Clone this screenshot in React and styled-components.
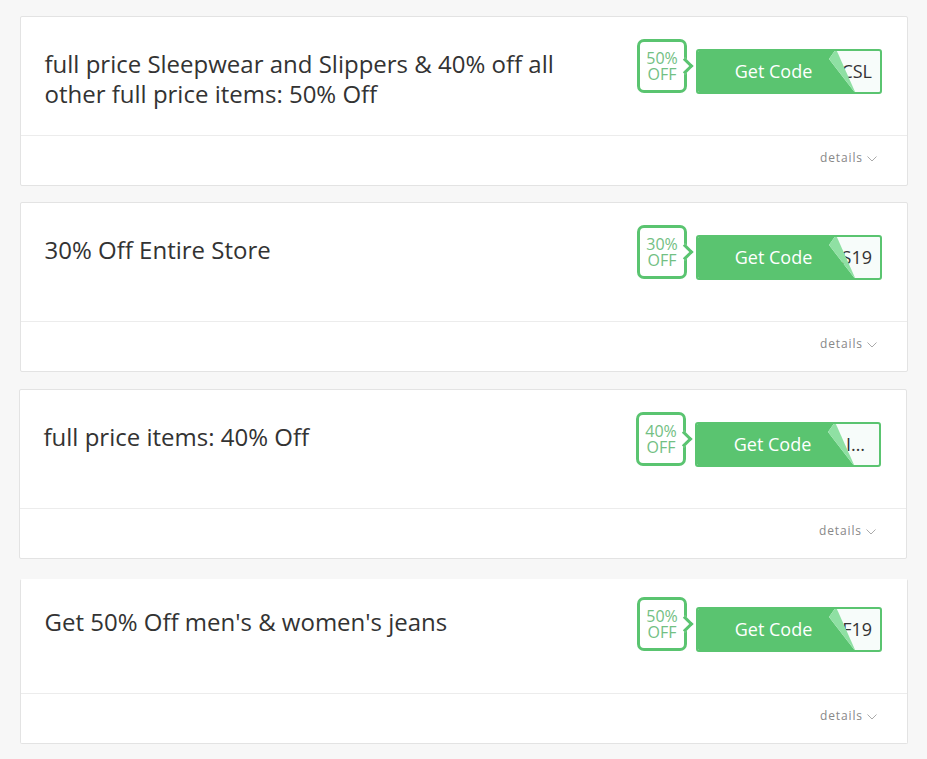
import React from 'react';
import styled, { createGlobalStyle } from 'styled-components';

const GlobalStyle = createGlobalStyle`
  html, body {
    margin: 0;
    background: #f7f7f7;
    font-family: "Open Sans", "Liberation Sans", sans-serif;
  }
`;

const coupons = [
  { title: 'full price Sleepwear and Slippers & 40% off all other full price items: 50% Off', pct: '50%', code: 'CSL' },
  { title: '30% Off Entire Store', pct: '30%', code: 'S19', gap: 17 },
  { title: 'full price items: 40% Off', pct: '40%', code: 'I…', codeRight: 14, shift: true, gap: 20 },
  { title: "Get 50% Off men's & women's jeans", pct: '50%', code: 'F19', cut: true },
];

function Chevron() {
  return (
    <ChevronIcon viewBox="0 0 10 6" aria-hidden="true">
      <path d="M0.5 0.5 L5 5 L9.5 0.5" fill="none" stroke="#aaa" strokeWidth="1" />
    </ChevronIcon>
  );
}

function Coupon({ title, pct, code, codeRight, shift, cut, gap }) {
  return (
    <Card $shift={shift} $cut={cut} $gap={gap}>
      <Main $cut={cut}>
        <Title>{title}</Title>
        <Actions>
          <Bubble>
            {pct}
            <br />
            OFF
          </Bubble>
          <CodeButton>
            <CodeText $right={codeRight}>{code}</CodeText>
            <Cover>Get Code</Cover>
            <Fold />
          </CodeButton>
        </Actions>
      </Main>
      <Footer>
        <Details>details</Details>
        <Chevron />
      </Footer>
    </Card>
  );
}

export default function App() {
  return (
    <Page>
      <GlobalStyle />
      {coupons.map((c, i) => (
        <Coupon key={i} {...c} />
      ))}
    </Page>
  );
}

const Page = styled.div`
  height: 759px;
  box-sizing: border-box;
  padding: 16px 19px 0 20px;
  overflow: hidden;
`;

const Card = styled.div`
  background: #fff;
  border: 1px solid #e3e3e3;
  border-top-color: ${p => (p.$cut ? '#fff' : '#e3e3e3')};
  border-radius: 2px;
  margin-bottom: ${p => p.$gap || 16}px;
  transform: ${p => (p.$shift ? 'translateX(-1px)' : 'none')};
`;

const Main = styled.div`
  display: flex;
  justify-content: space-between;
  align-items: flex-start;
  padding: ${p => (p.$cut ? 17 : 22)}px 25px 0 24px;
  border-bottom: 1px solid #ececec;
  height: 96px;
`;

const Title = styled.h3`
  margin: 10px 0 0 -0.5px;
  width: 530px;
  font-size: 24px;
  line-height: 30px;
  font-weight: 400;
  color: #333;
`;

const Actions = styled.div`
  display: flex;
  align-items: flex-start;
  gap: 9px;
`;

const Bubble = styled.div`
  position: relative;
  width: 50px;
  height: 54px;
  box-sizing: border-box;
  border: 3px solid #5ac470;
  border-radius: 7px;
  background: #fff;
  color: #72c083;
  font-size: 16px;
  line-height: 16px;
  text-align: center;
  padding-top: 8px;

  &::after {
    content: '';
    position: absolute;
    right: -6.5px;
    top: 18px;
    width: 12px;
    height: 12px;
    background: #fff;
    border-top: 3px solid #5ac470;
    border-right: 3px solid #5ac470;
    box-sizing: border-box;
    transform: rotate(45deg);
  }
`;

const CodeButton = styled.div`
  position: relative;
  width: 186px;
  height: 45px;
  margin-top: 10px;
  box-sizing: border-box;
  border: 2px solid #5ac470;
  border-radius: 3px;
  background: #f7fcfa;
  overflow: hidden;
`;

const CodeText = styled.div`
  position: absolute;
  right: ${p => p.$right || 8}px;
  top: 0;
  line-height: 41px;
  font-size: 18px;
  color: #333;
  white-space: nowrap;
`;

const Cover = styled.div`
  position: absolute;
  left: -2px;
  top: -2px;
  width: 162px;
  height: 45px;
  padding-right: 7px;
  box-sizing: border-box;
  background: #5ac470;
  color: #fff;
  font-size: 18px;
  line-height: 45px;
  text-align: center;
  clip-path: polygon(0 0, 140px 0, 133px 10px, 160px 45px, 0 45px);
`;

const Fold = styled.div`
  position: absolute;
  left: 131px;
  top: -2px;
  width: 30px;
  height: 45px;
  background: #8fe0a3;
  clip-path: polygon(7px 0, 0 10px, 27px 45px);
`;

const Footer = styled.div`
  height: 49px;
  display: flex;
  justify-content: flex-end;
  align-items: center;
  gap: 4px;
  padding: 0 30px 7px 0;
  box-sizing: border-box;
`;

const Details = styled.span`
  font-size: 12px;
  letter-spacing: 0.9px;
  color: #888;
`;

const ChevronIcon = styled.svg`
  width: 10px;
  height: 6px;
  margin-top: 3px;
`;
